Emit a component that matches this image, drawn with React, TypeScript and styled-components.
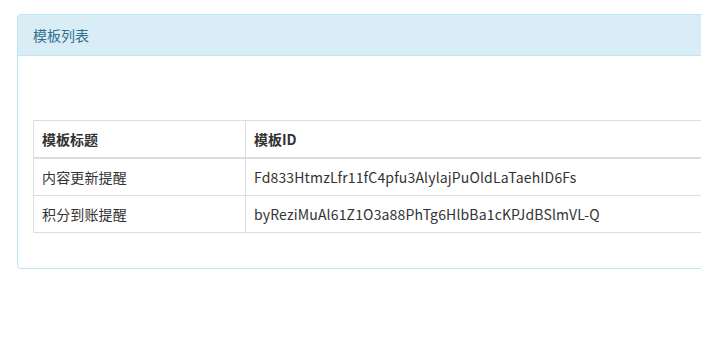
import React from "react";
import styled, { createGlobalStyle } from "styled-components";

const Global = createGlobalStyle`
  html, body { margin: 0; padding: 0; background: #fff; overflow: hidden; }
  body {
    font-family: "Noto Sans CJK SC", "Open Sans", sans-serif;
    font-size: 14px;
    line-height: 20px;
    color: #333;
  }
`;

const Viewport = styled.div`
  width: 100vw;
  overflow: hidden;
`;

const Page = styled.div`
  padding: 14px 0 0 17px;
  width: 1200px;
`;

const Panel = styled.div`
  border: 1px solid #bce8f1;
  border-radius: 4px;
  background: #fff;
  box-shadow: 0 1px 1px rgba(0, 0, 0, 0.05);
`;

const PanelHeading = styled.div`
  padding: 10px 15px;
  background: #d9edf7;
  color: #31708f;
  border-bottom: 1px solid #bce8f1;
  border-radius: 3px 3px 0 0;
  font-size: 14px;
  line-height: 20px;
`;

const PanelBody = styled.div`
  padding: 15px;
`;

const Toolbar = styled.div`
  height: 49px;
`;

const Table = styled.table`
  width: 100%;
  border-collapse: collapse;
  border: 1px solid #ddd;
  margin-bottom: 20px;
`;

const Th = styled.th<{ $w?: number }>`
  text-align: left;
  font-weight: bold;
  padding: 8px;
  line-height: 20px;
  border: 1px solid #ddd;
  border-bottom-width: 2px;
  width: ${(p) => (p.$w ? `${p.$w}px` : "auto")};
`;

const Td = styled.td`
  padding: 8px;
  line-height: 20px;
  border: 1px solid #ddd;
  letter-spacing: 0.15px;
`;

const rows = [
  { title: "内容更新提醒", id: "Fd833HtmzLfr11fC4pfu3AlylajPuOldLaTaehID6Fs" },
  { title: "积分到账提醒", id: "byReziMuAl61Z1O3a88PhTg6HlbBa1cKPJdBSlmVL-Q" },
];

export default function App() {
  return (
    <>
      <Global />
      <Viewport>
        <Page>
          <Panel>
            <PanelHeading>模板列表</PanelHeading>
            <PanelBody>
              <Toolbar />
              <Table>
                <thead>
                  <tr>
                    <Th $w={195}>模板标题</Th>
                    <Th>模板ID</Th>
                  </tr>
                </thead>
                <tbody>
                  {rows.map((r) => (
                    <tr key={r.id}>
                      <Td>{r.title}</Td>
                      <Td>{r.id}</Td>
                    </tr>
                  ))}
                </tbody>
              </Table>
            </PanelBody>
          </Panel>
        </Page>
      </Viewport>
    </>
  );
}
